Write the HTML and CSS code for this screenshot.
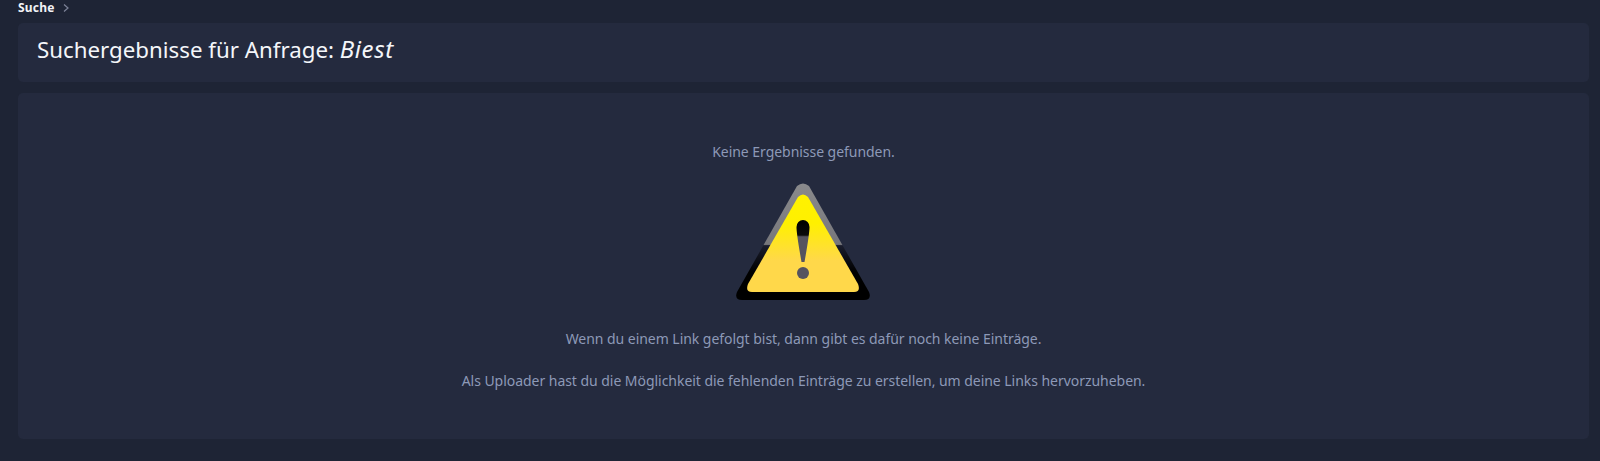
FILE: index.html
```html
<!DOCTYPE html>
<html lang="de">
<head>
<meta charset="utf-8">
<title>Suche</title>
<link rel="stylesheet" href="styles.css">
</head>
<body>
<nav class="crumbs"><a class="crumb">Suche</a><svg class="sep" width="6" height="8" viewBox="0 0 6 8"><path d="M1 .5 L5 4 L1 7.500" fill="none" stroke="#7d8398" stroke-width="1.200"/></svg></nav>
<header class="card head"><h1>Suchergebnisse für Anfrage: <em>Biest</em></h1></header>
<main class="card body">
<p class="first">Keine Ergebnisse gefunden.</p>
<svg class="warn" width="136" height="120" viewBox="0 0 136 120">
<defs>
<linearGradient id="outer" gradientUnits="userSpaceOnUse" x1="0" y1="0" x2="0" y2="120">
<stop offset="0" stop-color="#8a8a8c"/><stop offset=".52" stop-color="#77777b"/><stop offset=".53" stop-color="#1a1d2c"/><stop offset=".75" stop-color="#000"/><stop offset="1" stop-color="#000"/>
</linearGradient>
<linearGradient id="inner" gradientUnits="userSpaceOnUse" x1="0" y1="12" x2="0" y2="110">
<stop offset="0" stop-color="#fff200"/><stop offset=".3" stop-color="#fff000"/><stop offset=".68" stop-color="#ffd84a"/><stop offset="1" stop-color="#ffd84a"/>
</linearGradient>
<linearGradient id="mark" gradientUnits="userSpaceOnUse" x1="0" y1="38" x2="0" y2="80">
<stop offset="0" stop-color="#000"/><stop offset=".36" stop-color="#0a0a0a"/><stop offset=".4" stop-color="#55535f"/><stop offset="1" stop-color="#55535f"/>
</linearGradient>
</defs>
<path d="M62 4 Q68 -1 74 4 L134 110 Q137 118 129 118 L7 118 Q-1 118 2 110 Z" fill="url(#outer)"/>
<path d="M63 15 Q68 10 73 15 L123 102 Q126 110 119 110 L17 110 Q10 110 13 102 Z" fill="url(#inner)"/>
<path d="M61.500 45 A6.500 7 0 0 1 74.500 45 Q74.500 52 69.500 80 L66.500 80 Q61.500 52 61.500 45 Z" fill="url(#mark)"/>
<circle cx="68" cy="91" r="6" fill="#55535f"/>
</svg>
<p class="line">Wenn du einem Link gefolgt bist, dann gibt es dafür noch keine Einträge.</p>
<p class="line">Als Uploader hast du die Möglichkeit die fehlenden Einträge zu erstellen, um deine Links hervorzuheben.</p>
</main>
</body>
</html>
```
FILE: styles.css
```css
html, body { height: 100%; }
body {
  margin: 0;
  padding: 0 11px 0 18px;
  background: #1e2435;
  font-family: "Noto Sans", "Open Sans", sans-serif;
  overflow: hidden;
}
.crumbs {
  height: 23px;
  display: flex;
  align-items: flex-start;
  gap: 8px;
  font-size: 12px;
  line-height: 15px;
}
.crumb { color: #f2f3f7; font-weight: 700; letter-spacing: 0.2px; }
.sep { margin-top: 4px; }
.card {
  background: #242a3e;
  border-radius: 5px;
}
.head {
  height: 59px;
  padding: 0 19px 6px;
  box-sizing: border-box;
  display: flex;
  align-items: center;
}
h1 {
  margin: 0;
  color: #f4f6fa;
  font-size: 22.3px;
  font-weight: 400;
  line-height: 30px;
}
h1 em { font-size: 24px; letter-spacing: 0.6px; }
.body {
  margin-top: 11px;
  height: 346px;
  box-sizing: border-box;
  padding-top: 49px;
  display: flex;
  flex-direction: column;
  align-items: center;
  color: #8d99b7;
  font-size: 14px;
  letter-spacing: -0.04px;
  line-height: 20px;
}
.body p { margin: 0; }
.warn { margin: 20px 2px 0 0; display: block; }
.line { margin-top: 22px !important; }
.warn + .line { margin-top: 27px !important; }
```
